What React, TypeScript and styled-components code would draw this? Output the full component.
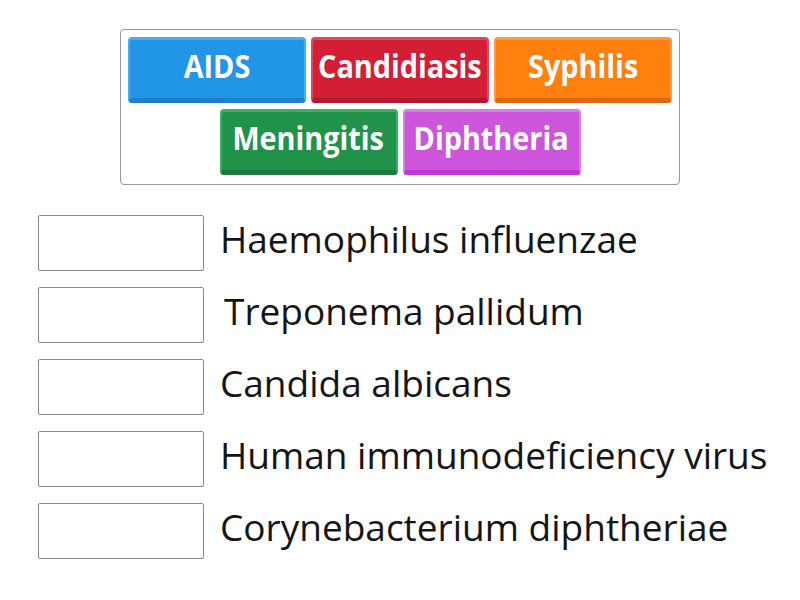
import React from "react";
import styled, { createGlobalStyle } from "styled-components";

const Global = createGlobalStyle`
  html, body { margin: 0; padding: 0; background: #fff; }
  body { font-family: "Open Sans", "Liberation Sans", sans-serif; }
`;

const Page = styled.div`
  width: 800px;
  height: 600px;
  display: flex;
  flex-direction: column;
  align-items: center;
  padding-top: 29px;
  box-sizing: border-box;
`;

const Bank = styled.div`
  width: 560px;
  height: 156px;
  box-sizing: border-box;
  border: 1px solid #9a9a9a;
  border-radius: 4px;
  padding: 7px 8px;
  display: flex;
  flex-direction: column;
  align-items: center;
  gap: 6px;
`;

const TileRow = styled.div`
  display: flex;
  gap: 5px;
`;

type TileColors = { base: string; light: string; dark: string };

const Tile = styled.div<{ $c: TileColors }>`
  width: 178px;
  height: 66px;
  box-sizing: border-box;
  border-radius: 4px;
  background: ${(p) => p.$c.base};
  border-top: 3px solid ${(p) => p.$c.light};
  border-left: 2px solid ${(p) => p.$c.light};
  border-right: 2px solid ${(p) => p.$c.light};
  border-bottom: 5px solid ${(p) => p.$c.dark};
  display: flex;
  align-items: center;
  justify-content: center;
  padding-bottom: 6px;
  overflow: hidden;
`;

const TileText = styled.span`
  display: inline-block;
  color: #fff;
  font-family: "Open Sans", sans-serif;
  font-weight: 700;
  font-size: 32px;
  line-height: 1.2;
  white-space: nowrap;
  transform: scaleX(0.9);
`;

const List = styled.div`
  margin-top: 30px;
  width: 800px;
  padding-left: 38px;
  box-sizing: border-box;
  display: flex;
  flex-direction: column;
  gap: 17px;
`;

const Row = styled.div`
  display: flex;
  align-items: center;
  gap: 16px;
  height: 55px;
`;

const Slot = styled.div`
  width: 166px;
  height: 56px;
  box-sizing: border-box;
  border: 1px solid #8a8a8a;
  border-radius: 2px;
  flex-shrink: 0;
`;

const Label = styled.div<{ $shift?: number }>`
  font-family: "Open Sans", sans-serif;
  font-size: 37px;
  color: #151515;
  white-space: nowrap;
  padding-bottom: 9px;
  margin-left: ${(p) => p.$shift || 0}px;
`;

const C = {
  blue: { base: "#2196e6", light: "#4eaaee", dark: "#1a80cf" },
  red: { base: "#d41e36", light: "#de4a5c", dark: "#b5182d" },
  orange: { base: "#ff800e", light: "#ff9a40", dark: "#e0670a" },
  green: { base: "#21924a", light: "#35b562", dark: "#1a7a3c" },
  purple: { base: "#cc55dc", light: "#d97ee5", dark: "#c035d4" },
};

const items: [string, number][] = [
  ["Haemophilus influenzae", 0],
  ["Treponema pallidum", 4],
  ["Candida albicans", 0],
  ["Human immunodeficiency virus", 0],
  ["Corynebacterium diphtheriae", 0],
];

export default function App() {
  return (
    <>
      <Global />
      <Page>
        <Bank>
          <TileRow>
            <Tile $c={C.blue}><TileText>AIDS</TileText></Tile>
            <Tile $c={C.red}><TileText>Candidiasis</TileText></Tile>
            <Tile $c={C.orange}><TileText>Syphilis</TileText></Tile>
          </TileRow>
          <TileRow>
            <Tile $c={C.green}><TileText>Meningitis</TileText></Tile>
            <Tile $c={C.purple}><TileText>Diphtheria</TileText></Tile>
          </TileRow>
        </Bank>
        <List>
          {items.map(([t, s]) => (
            <Row key={t}>
              <Slot />
              <Label $shift={s}>{t}</Label>
            </Row>
          ))}
        </List>
      </Page>
    </>
  );
}
